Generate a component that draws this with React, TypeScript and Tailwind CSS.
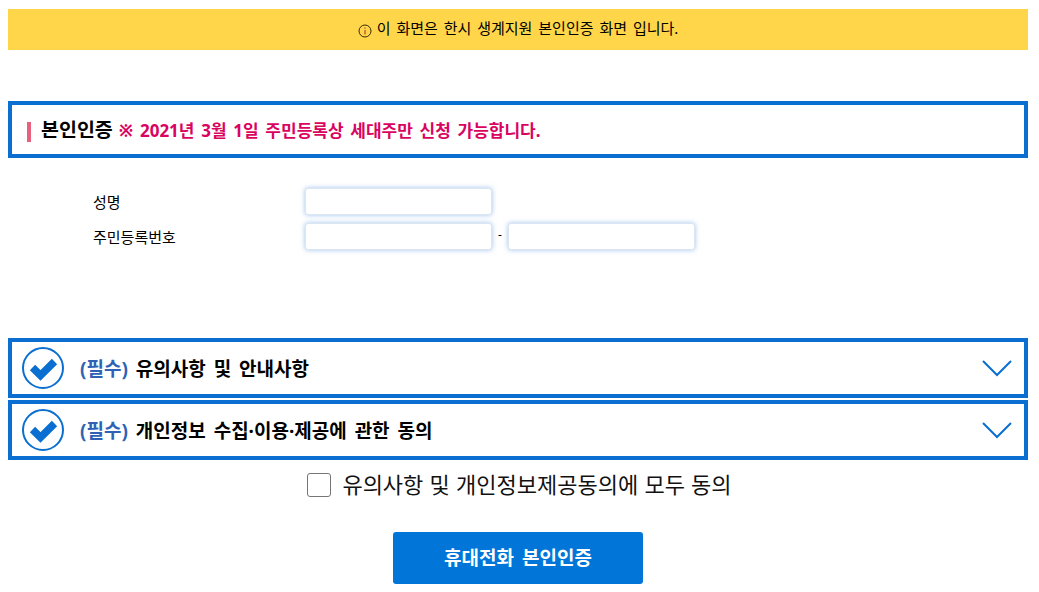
const font = "font-['Noto_Sans','Noto_Sans_CJK_KR',sans-serif]"

function CheckCircle() {
  return (
    <svg width="44" height="44" viewBox="0 0 44 44" fill="none" className="shrink-0">
      <circle cx="22" cy="22" r="20" stroke="#0a6fd0" strokeWidth="2" />
      <path d="M11.5 21.5 L19.5 29.5 L33.5 15.5" stroke="#0a6fd0" strokeWidth="7.5" />
    </svg>
  )
}

function Chevron() {
  return (
    <svg width="30" height="18" viewBox="0 0 30 18" fill="none" className="shrink-0">
      <path d="M1 2 L15 16 L29 2" stroke="#0a6fd0" strokeWidth="2" />
    </svg>
  )
}

function AgreeRow({ title }: { title: string }) {
  return (
    <div className="h-[60px] border-4 border-[#0a6fd0] flex items-center pl-[9px] pr-[12px]">
      <CheckCircle />
      <div className="ml-[15px] mt-[2px] text-[19px] font-bold flex-1 leading-none [word-spacing:3px]">
        <span className="text-[#2f62b5]">(필수)</span> <span className="text-black">{title}</span>
      </div>
      <Chevron />
    </div>
  )
}

function Field({ className = '' }: { className?: string }) {
  return (
    <input className={`w-[187px] h-[27px] bg-white rounded-[3px] border border-[#dbe6f2] shadow-[0_0_5px_rgba(80,145,220,0.55)] ${className}`} />
  )
}

export default function App() {
  return (
    <div className={`w-[1039px] h-[592px] bg-white pt-[9px] px-[8px] overflow-hidden ${font}`}>
      <div className="w-[1020px]">
        <div className="h-[41px] bg-[#ffd54a] flex items-center justify-center text-[15px] text-black pb-[2px] [word-spacing:2px]">
          <svg width="14" height="14" viewBox="0 0 14 14" fill="none" className="mr-[5px] mt-[5px]">
            <circle cx="7" cy="7" r="6" stroke="#3a2a00" strokeWidth="1" />
            <path d="M7 6 V10.5 M7 3.5 V4.8" stroke="#b3261e" strokeWidth="1" />
          </svg>
          <span>이 화면은 한시 생계지원 본인인증 화면 입니다.</span>
        </div>

        <div className="mt-[51px] h-[57px] border-4 border-[#0a6fd0] flex items-center pl-[15px]">
          <div className="w-[4px] h-[20px] bg-[#e95f7e] mt-[4px]" />
          <span className="ml-[10px] text-[19.5px] font-bold text-black">본인인증</span>
          <span className="ml-[6px] text-[17px] font-bold text-[#d9045f] mt-[2px] [word-spacing:2.3px]">※ 2021년 3월 1일 주민등록상 세대주만 신청 가능합니다.</span>
        </div>

        <div className="mt-[30px] flex flex-col gap-[8px] text-[15px] text-black">
          <div className="flex items-center pl-[85px]">
            <span className="w-[212px] mt-[2px]">성명</span>
            <Field />
          </div>
          <div className="flex items-center pl-[85px]">
            <span className="w-[212px] mt-[2px]">주민등록번호</span>
            <Field />
            <span className="w-[16px] text-center text-[12px] -mt-[4px]">-</span>
            <Field />
          </div>
        </div>

        <div className="mt-[88px] flex flex-col gap-[2px]">
          <AgreeRow title="유의사항 및 안내사항" />
          <AgreeRow title="개인정보 수집·이용·제공에 관한 동의" />
        </div>

        <div className="mt-[13px] pl-[3px] flex items-center justify-center">
          <div className="w-[24px] h-[24px] border border-[#767676] rounded-[3px] bg-white" />
          <span className="ml-[11px] -mt-[3px] text-[22px] leading-[26px] text-[#111] [word-spacing:0.5px]">유의사항 및 개인정보제공동의에 모두 동의</span>
        </div>

        <div className="mt-[35px] flex justify-center">
          <button className="w-[250px] h-[52px] rounded-[3px] bg-[#0275d8] text-white text-[19px] font-bold [word-spacing:3px]">휴대전화 본인인증</button>
        </div>
      </div>
    </div>
  )
}
